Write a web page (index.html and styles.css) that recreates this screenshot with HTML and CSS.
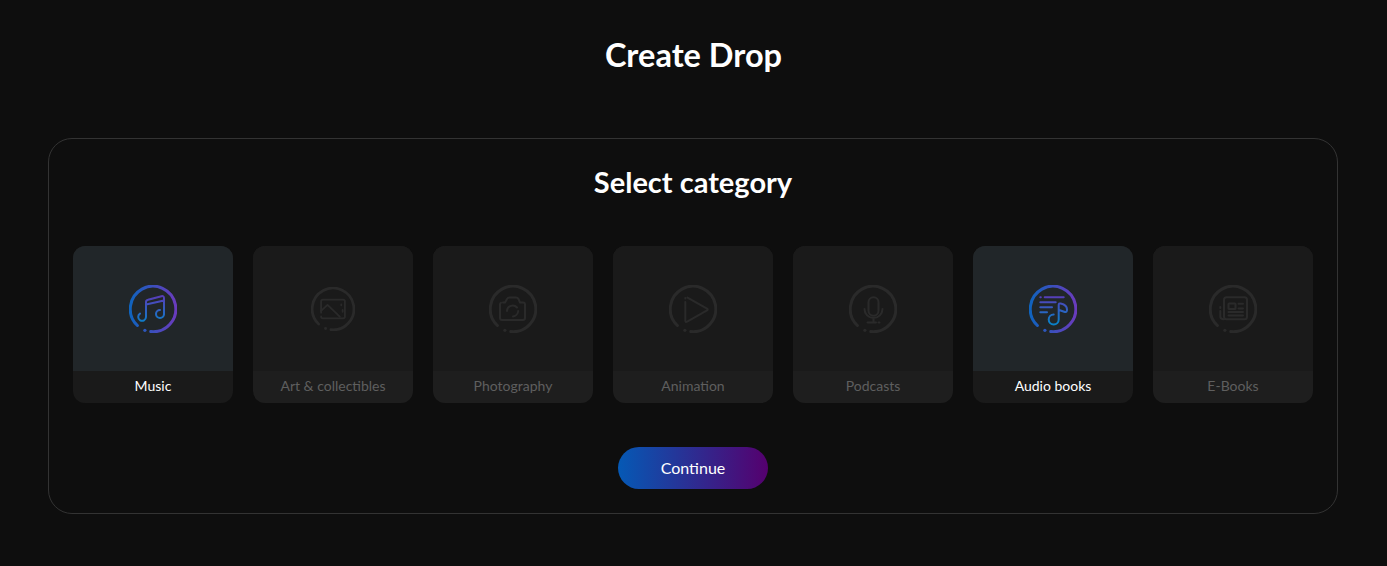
FILE: index.html
```html
<!doctype html>
<html lang="en">
<head>
    <meta name="viewport" content="width=device-width">
    <meta charset="utf-8">
    <title>Create Drop</title>

    <link rel="stylesheet" href="styles.css">
</head>
<body>

<h1 class="page-title">Create Drop</h1>

<section class="panel">
    <h2 class="panel-title">Select category</h2>

    <ul class="categories">
        <li class="category category_active">
            <div class="category-icon">
                <svg class="icon" viewBox="0 0 48 48" fill="none" stroke-width="2" stroke-linecap="round" stroke-linejoin="round">
                    <defs>
                        <linearGradient id="ring" gradientUnits="userSpaceOnUse" x1="1" y1="24" x2="47" y2="24">
                            <stop offset="0" stop-color="#0f63bd"/>
                            <stop offset="1" stop-color="#6a3bbd"/>
                        </linearGradient>
                        <linearGradient id="art" gradientUnits="userSpaceOnUse" x1="24" y1="10" x2="24" y2="38">
                            <stop offset="0" stop-color="#5b3ab8"/>
                            <stop offset="1" stop-color="#0a80c8"/>
                        </linearGradient>
                    </defs>
                    <path class="ring" stroke="url(#ring)" d="M21.7 46.6A22.75 22.75 0 1 0 8.4 40.5"/>
                    <circle cx="15.9" cy="45.3" r="1.6" fill="url(#ring)"/>
                    <g stroke="url(#art)">
                        <path d="M17 28V17.2Q17 15.2 19 14.8L32.5 11.2Q35 10.7 35 13.2V29M17 19.6L35 15.6"/>
                        <path d="M17 28.5V32A3.9 3.9 0 1 1 11 28.6"/>
                        <path d="M35 29A4 4 0 1 1 31 25"/>
                    </g>
                </svg>
            </div>
            <div class="category-name">Music</div>
        </li>
        <li class="category">
            <div class="category-icon">
                <svg class="icon icon_small" viewBox="0 0 48 48" fill="none" stroke="currentColor" stroke-width="2" stroke-linecap="round" stroke-linejoin="round">
                    <path class="ring" d="M21.7 46.6A22.75 22.75 0 1 0 8.4 40.5"/>
                    <circle cx="15.9" cy="45.3" r="1.6" fill="currentColor" stroke="none"/>
                    <path d="M11 28V15.8Q11 13.8 13 13.8H35Q37 13.8 37 15.8V32.2Q37 34.2 35 34.2H13Q11 34.2 11 32.2"/>
                    <path d="M11 26L18 19.5L28 29L31.5 32.5M33 19V20M34.5 25V27"/>
                </svg>
            </div>
            <div class="category-name">Art &amp; collectibles</div>
        </li>
        <li class="category">
            <div class="category-icon">
                <svg class="icon" viewBox="0 0 48 48" fill="none" stroke="currentColor" stroke-width="2" stroke-linecap="round" stroke-linejoin="round">
                    <path class="ring" d="M21.7 46.6A22.75 22.75 0 1 0 8.4 40.5"/>
                    <circle cx="15.9" cy="45.3" r="1.6" fill="currentColor" stroke="none"/>
                    <path d="M14 17.5H16L18 14Q18.8 12.6 20.5 12.6H27Q28.7 12.6 29.5 14L31 17.5H34Q36 17.5 36 19.5V33Q36 35 34 35H13Q11 35 11 33V19.5Q11 18 12 17.7"/>
                    <path d="M18 26A5.7 5.7 0 0 1 28 22.5M29.2 26A5.7 5.7 0 0 1 24 31.4"/>
                </svg>
            </div>
            <div class="category-name">Photography</div>
        </li>
        <li class="category">
            <div class="category-icon">
                <svg class="icon" viewBox="0 0 48 48" fill="none" stroke="currentColor" stroke-width="2" stroke-linecap="round" stroke-linejoin="round">
                    <path class="ring" d="M21.7 46.6A22.75 22.75 0 1 0 8.4 40.5"/>
                    <circle cx="15.9" cy="45.3" r="1.6" fill="currentColor" stroke="none"/>
                    <path d="M16.3 17V35.5Q16.3 37.6 18.2 36.6L38 25.4Q39.4 24.5 38 23.6L18.5 12.6M16.3 13V13.4"/>
                </svg>
            </div>
            <div class="category-name">Animation</div>
        </li>
        <li class="category">
            <div class="category-icon">
                <svg class="icon" viewBox="0 0 48 48" fill="none" stroke="currentColor" stroke-width="2" stroke-linecap="round" stroke-linejoin="round">
                    <path class="ring" d="M21.7 46.6A22.75 22.75 0 1 0 8.4 40.5"/>
                    <circle cx="15.9" cy="45.3" r="1.6" fill="currentColor" stroke="none"/>
                    <rect x="19.5" y="12.3" width="10" height="18.4" rx="5"/>
                    <path d="M15.5 24A9 9 0 0 0 33.5 24M24.5 33V37.5M18.5 37.5H27M29.5 37.5H30.5"/>
                </svg>
            </div>
            <div class="category-name">Podcasts</div>
        </li>
        <li class="category category_active">
            <div class="category-icon">
                <svg class="icon" viewBox="0 0 48 48" fill="none" stroke-width="2" stroke-linecap="round" stroke-linejoin="round">
                    <path class="ring" stroke="url(#ring)" d="M21.7 46.6A22.75 22.75 0 1 0 8.4 40.5"/>
                    <circle cx="15.9" cy="45.3" r="1.6" fill="url(#ring)"/>
                    <g stroke="url(#art)">
                        <path d="M11.3 12.3H11.8M15.7 12.3H34.7M11.3 17.3H26.7M11.3 22.3H23M11.3 27.3H18"/>
                        <path d="M29.7 34.5A5 5 0 1 1 24.7 29.5M29.7 34.5V20Q29.7 18 31.7 18.5Q38 20 38 24.5Q38 27.5 36 27L30 25"/>
                    </g>
                </svg>
            </div>
            <div class="category-name">Audio books</div>
        </li>
        <li class="category">
            <div class="category-icon">
                <svg class="icon" viewBox="0 0 48 48" fill="none" stroke="currentColor" stroke-width="2" stroke-linecap="round" stroke-linejoin="round">
                    <path class="ring" d="M21.7 46.6A22.75 22.75 0 1 0 8.4 40.5"/>
                    <circle cx="15.9" cy="45.3" r="1.6" fill="currentColor" stroke="none"/>
                    <rect x="15" y="12.3" width="23" height="22" rx="2.5"/>
                    <path d="M11.3 22V23M11.3 26V31.5Q11.3 34.3 15 34.3"/>
                    <rect x="19.5" y="18.5" width="7" height="5.5" rx="0.5"/>
                    <path d="M29.5 18.8H34M29.5 23.5H34M19.5 27H34M19.5 30.5H34"/>
                </svg>
            </div>
            <div class="category-name">E-Books</div>
        </li>
    </ul>

    <div class="actions">
        <button class="button">Continue</button>
    </div>
</section>

</body>
</html>
```

FILE: styles.css
```css
html, body {
    margin: 0;
    padding: 0;
    color: #fff;
    background: #0e0e0e;
    font-family: Lato, "Open Sans", Arial, sans-serif;
}

.page-title {
    margin: 0;
    padding-top: 35px;
    height: 138px;
    box-sizing: border-box;
    font-size: 32.5px;
    line-height: 40px;
    font-weight: 700;
    text-align: center;
}

.panel {
    margin: 0 49px 0 48px;
    height: 376px;
    box-sizing: border-box;
    padding: 0 24px;
    border: 1px solid #333;
    border-radius: 24px;
}

.panel-title {
    margin: 0;
    padding-top: 26px;
    height: 107px;
    box-sizing: border-box;
    font-size: 29px;
    line-height: 34px;
    font-weight: 700;
    text-align: center;
}

.categories {
    list-style: none;
    margin: 0;
    padding: 0;
    display: flex;
    gap: 20px;
}

.category {
    flex: 1;
    height: 157px;
    border-radius: 12px;
    overflow: hidden;
    display: flex;
    flex-direction: column;
    color: #2a2a2a;
    background: #1e1e1e;
}
    .category-icon {
        flex: 1;
        display: flex;
        align-items: center;
        justify-content: center;
        background: #1a1a1a;
    }
    .category-name {
        height: 32px;
        font-size: 14px;
        line-height: 30px;
        text-align: center;
        color: #5f5f5f;
    }

.category_active {
    background: #1a1a1a;
}
    .category_active .category-icon {
        background: #212629;
    }
    .category_active .category-name {
        color: #fff;
    }

.icon {
    width: 48px;
    height: 48px;
    display: block;
}
    .icon_small {
        width: 44px;
        height: 44px;
    }
    .icon .ring {
        stroke-width: 3;
    }

.actions {
    margin-top: 44px;
    display: flex;
    justify-content: center;
}

.button {
    width: 150px;
    height: 42px;
    padding: 0 0 2px;
    border: 0;
    border-radius: 21px;
    color: #fff;
    background: linear-gradient(90deg, #0559b5, #55006e);
    font-family: inherit;
    font-size: 16px;
    cursor: pointer;
}
```
